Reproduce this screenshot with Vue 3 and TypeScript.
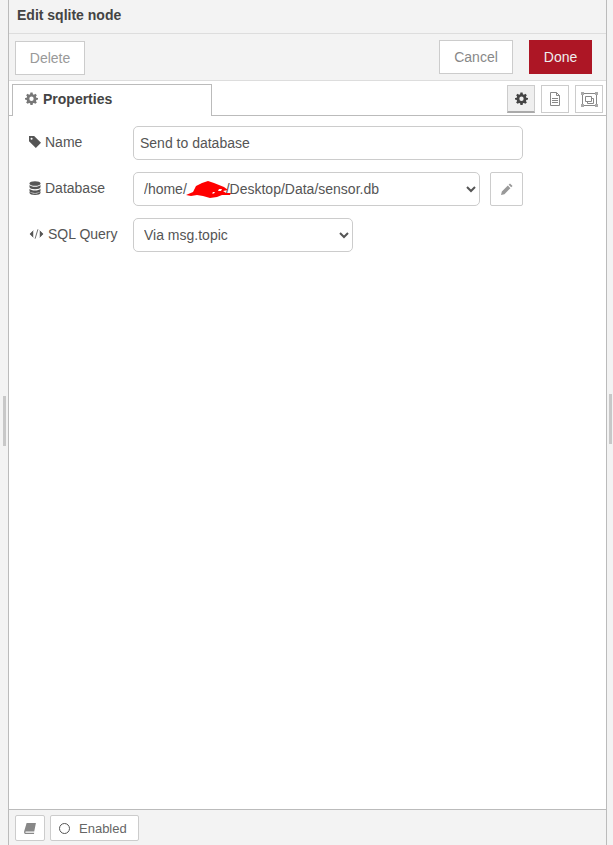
<script setup lang="ts">
const path = "/home/" + "\u00a0".repeat(10) + "/Desktop/Data/sensor.db";
</script>

<template>
  <div class="page">
    <div class="gutter left"><span class="grip"></span></div>
    <main class="tray">
      <header class="title">Edit sqlite node</header>
      <div class="toolbar">
        <button class="btn delete">Delete</button>
        <div class="toolbar-right">
          <button class="btn cancel">Cancel</button>
          <button class="btn done">Done</button>
        </div>
      </div>
      <div class="tabs">
        <div class="tab">
          <svg class="ico gear" viewBox="0 0 24 24" width="13" height="13"><path fill-rule="evenodd" d="M10 1h4l.6 3.100 1.900.8 2.700-1.800 2.700 2.700-1.800 2.700.8 1.900L24 11v3l-3.100.6-.8 1.900 1.800 2.700-2.700 2.700-2.700-1.800-1.900.8L14 24h-4l-.6-3.100-1.900-.8-2.700 1.800-2.700-2.700 1.800-2.700-.8-1.900L0 14v-3l3.100-.6.8-1.900-1.800-2.700 2.700-2.700 2.700 1.800 1.900-.8zM12 8.500a4 4 0 1 0 0 8 4 4 0 0 0 0-8z"/></svg>
          <span>Properties</span>
        </div>
        <div class="tab-buttons">
          <button class="tb active">
            <svg viewBox="0 0 24 24" width="13" height="13"><path fill="#444" fill-rule="evenodd" d="M10 1h4l.6 3.100 1.900.8 2.700-1.800 2.700 2.700-1.800 2.700.8 1.900L24 11v3l-3.100.6-.8 1.900 1.800 2.700-2.700 2.700-2.700-1.800-1.900.8L14 24h-4l-.6-3.100-1.900-.8-2.700 1.800-2.700-2.700 1.800-2.700-.8-1.900L0 14v-3l3.100-.6.8-1.900-1.800-2.700 2.700-2.700 2.700 1.800 1.900-.8zM12 8.500a4 4 0 1 0 0 8 4 4 0 0 0 0-8z"/></svg>
          </button>
          <button class="tb">
            <svg viewBox="0 0 12 14" width="12" height="14" fill="none" stroke="#888"><path d="M1.500.5h6l3 3v10h-9z"/><path d="M7.500.5v3h3M3 6.500h6M3 8.500h6M3 10.500h6"/></svg>
          </button>
          <button class="tb">
            <svg viewBox="0 0 17 15" width="17" height="15" fill="none" stroke="#888"><path d="M1.500 1.500h14v12h-14z"/><path d="M4.500 4.500h6v5h-6zM6.500 9.500v2h6v-5h-2"/><g fill="#aaa" stroke="none"><rect x="0" y="0" width="3" height="3"/><rect x="14" y="0" width="3" height="3"/><rect x="0" y="12" width="3" height="3"/><rect x="14" y="12" width="3" height="3"/></g></svg>
          </button>
        </div>
      </div>
      <form class="form" @submit.prevent>
        <div class="row">
          <label class="lbl">
            <svg class="ico" viewBox="0 0 14 14" width="12" height="12"><path fill-rule="evenodd" d="M0 0h6l8 8-6 6-8-8zM3 2a1.200 1.200 0 1 0 0 2.400A1.200 1.200 0 0 0 3 2z"/></svg>
            <span>Name</span>
          </label>
          <input class="field name" value="Send to database" />
        </div>
        <div class="row">
          <label class="lbl">
            <svg class="ico" viewBox="0 0 12 14" width="12" height="14"><ellipse cx="6" cy="2.500" rx="5.500" ry="2.300"/><path d="M.5 4v2c0 1.300 2.500 2.300 5.500 2.300s5.500-1 5.500-2.300V4C10.500 5.200 8.500 5.800 6 5.800S1.500 5.200.5 4zM.5 7.700v2c0 1.300 2.500 2.300 5.500 2.300s5.500-1 5.500-2.300v-2C10.500 8.900 8.500 9.500 6 9.500S1.500 8.900.5 7.700z"/><path d="M.5 10.400v1.300c0 1.300 2.500 2.300 5.500 2.300s5.500-1 5.500-2.300v-1.300C10.500 11.600 8.500 12.600 6 12.600S1.500 11.600.5 10.400z"/></svg>
            <span>Database</span>
          </label>
          <div class="select-wrap">
            <select class="field db">
              <option>{{ path }}</option>
            </select>
            <svg class="scribble" viewBox="0 0 46 18" width="46" height="18">
              <path fill="#f00" d="M0 14 7 11 10 5 16 2 22 0 28 2 33 4 38 6 42 9 37 10 40 12 45 12 44 14 36 14 31 16 24 17 17 15 11 14 5 15z"/>
              <path fill="#fff" d="M33 8h3l-1 2h-3zM27 11h2l-1 1.500h-2z"/>
            </svg>
          </div>
          <button class="edit" type="button">
            <svg viewBox="0 0 14 14" width="12" height="12"><path fill="#999" d="M10.500.5l3 3-1.600 1.600-3-3zM8 3l3 3-7 7-4 1 1-4z"/></svg>
          </button>
        </div>
        <div class="row">
          <label class="lbl">
            <svg class="ico code" viewBox="0 0 16 12" width="15" height="12" fill="none" stroke="#666" stroke-width="1"><path d="M4.500 2.500 1 6l3.500 3.500M11.500 2.500 15 6l-3.500 3.500M9.500 1 6.500 11"/></svg>
            <span>SQL Query</span>
          </label>
          <select class="field query">
            <option>Via msg.topic</option>
          </select>
        </div>
      </form>
      <footer class="foot">
        <button class="fbtn book">
          <svg viewBox="0 0 14 13" width="12" height="11"><path fill="#888" d="M3 0h11l-2 10H2.500c-.8 0-1 .4-1 .8s.3.7 1 .7H12l-.3 1.500H2C.8 13 0 12 0 10.800 0 10.400.1 10 .2 9.500z"/></svg>
        </button>
        <button class="fbtn enabled">
          <span class="ring"></span>
          <span>Enabled</span>
        </button>
      </footer>
    </main>
    <div class="gutter right"><span class="grip"></span></div>
  </div>
</template>

<style>
html, body { margin: 0; padding: 0; }
</style>

<style scoped>
.page {
  width: 613px;
  height: 845px;
  display: flex;
  overflow: hidden;
  font-family: "Liberation Sans", Arial, sans-serif;
  font-size: 14px;
  color: #555;
  background: #fff;
}
.gutter {
  background: #f3f3f3;
  display: flex;
  align-items: flex-start;
  flex: none;
}
.gutter.left { width: 8px; border-right: 1px solid #bbb; justify-content: flex-start; }
.gutter.right { width: 6px; border-left: 1px solid #bbb; }
.grip { display: block; width: 3px; height: 50px; background: #c8c8c8; }
.left .grip { margin: 396px 0 0 3px; }
.right .grip { margin: 394px 0 0 2px; }
.tray { flex: 1; min-width: 0; display: flex; flex-direction: column; }
.title {
  height: 33px;
  background: #f3f3f3;
  border-bottom: 1px solid #ddd;
  padding-left: 8px;
  line-height: 31px;
  font-size: 14px;
  font-weight: 700;
  color: #444;
  flex: none;
}
.toolbar {
  height: 40px;
  background: #f3f3f3;
  border-bottom: 1px solid #ddd;
  display: flex;
  justify-content: space-between;
  padding: 6px 14px 0 6px;
  flex: none;
}
.toolbar-right { display: flex; gap: 16px; }
.btn {
  height: 34px;
  box-sizing: border-box;
  border: 1px solid #ccc;
  background: #fff;
  color: #999;
  font: 14px "Liberation Sans", Arial, sans-serif;
  padding: 0;
}
.delete { width: 70px; margin-top: 1px; }
.cancel { width: 74px; color: #888; }
.done { width: 63px; background: #ad1625; border-color: #ad1625; color: #eee; }
.tabs {
  height: 35px;
  flex: none;
  display: flex;
  justify-content: space-between;
  border-bottom: 1px solid #bbb;
  box-sizing: border-box;
  padding: 3px 3px 0 3px;
  background: #fff;
}
.tab {
  width: 200px;
  height: 32px;
  box-sizing: border-box;
  border: 1px solid #bbb;
  border-bottom: none;
  background: #fff;
  display: flex;
  align-items: center;
  padding: 0 0 4px 12px;
  gap: 5px;
  font-weight: 700;
  color: #444;
  margin-bottom: -1px;
}
.ico { fill: #555; flex: none; }
.gear { fill: #777; }
.tab-buttons { display: flex; gap: 6px; margin-top: 1px; }
.tb {
  width: 28px;
  height: 28px;
  box-sizing: border-box;
  border: 1px solid #ccc;
  background: #fff;
  padding: 0;
  display: flex;
  align-items: center;
  justify-content: center;
}
.tb.active { background: #efefef; border-bottom: 2px solid #aaa; }
.form { flex: 1; min-height: 0; padding: 10px 0 0 20px; display: flex; flex-direction: column; gap: 12px; }
.row { display: flex; align-items: center; height: 34px; }
.lbl { width: 104px; display: flex; align-items: center; gap: 4px; flex: none; margin-top: -2px; color: #555; }
.field {
  height: 34px;
  box-sizing: border-box;
  border: 1px solid #ccc;
  border-radius: 5px;
  background: #fff;
  color: #555;
  font: 14px "Liberation Sans", Arial, sans-serif;
  outline: none;
}
.name { width: 390px; padding: 0 6px; }
.select-wrap { position: relative; width: 347px; height: 34px; flex: none; }
.db { width: 347px; padding: 0 6px; }
.scribble { position: absolute; left: 53px; top: 9px; }
.edit {
  width: 33px;
  height: 34px;
  box-sizing: border-box;
  margin-left: 10px;
  border: 1px solid #ccc;
  border-radius: 2px;
  background: #fff;
  padding: 0;
  display: flex;
  align-items: center;
  justify-content: center;
}
.query { width: 220px; padding: 0 6px; }
.foot {
  height: 36px;
  flex: none;
  background: #f3f3f3;
  border-top: 1px solid #bbb;
  display: flex;
  gap: 5px;
  padding: 5px 6px 0;
  box-sizing: border-box;
}
.fbtn {
  height: 26px;
  box-sizing: border-box;
  border: 1px solid #ccc;
  border-radius: 2px;
  background: #fff;
  color: #666;
  font: 13px "Liberation Sans", Arial, sans-serif;
  padding: 0;
  display: flex;
  align-items: center;
  justify-content: center;
}
.book { width: 30px; }
.enabled { width: 89px; gap: 9px; justify-content: flex-start; padding-left: 8px; }
.ring { width: 11px; height: 11px; box-sizing: border-box; border: 1px solid #555; border-radius: 50%; }
</style>
